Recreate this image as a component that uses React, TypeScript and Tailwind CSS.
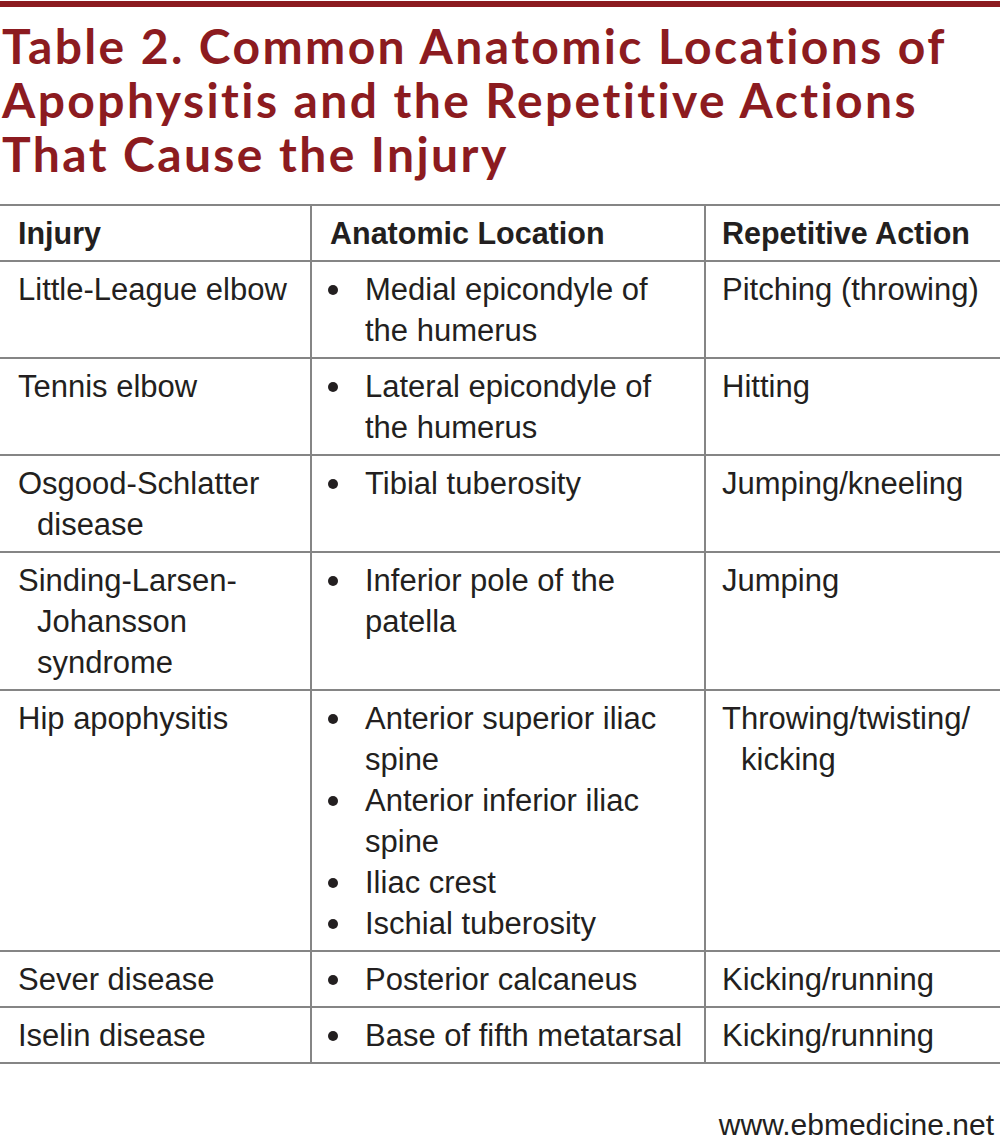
const body = "font-['Liberation_Sans',Arial,sans-serif]"

type Row = {
  injury: string
  locations: string[]
  action: React.ReactNode
}

const rows: Row[] = [
  { injury: 'Little-League elbow', locations: ['Medial epicondyle of the humerus'], action: 'Pitching (throwing)' },
  { injury: 'Tennis elbow', locations: ['Lateral epicondyle of the humerus'], action: 'Hitting' },
  { injury: 'Osgood-Schlatter disease', locations: ['Tibial tuberosity'], action: 'Jumping/kneeling' },
  { injury: 'Sinding-Larsen-Johansson syndrome', locations: ['Inferior pole of the patella'], action: 'Jumping' },
  {
    injury: 'Hip apophysitis',
    locations: ['Anterior superior iliac spine', 'Anterior inferior iliac spine', 'Iliac crest', 'Ischial tuberosity'],
    action: (
      <>
        Throwing/twisting/<wbr />kicking
      </>
    ),
  },
  { injury: 'Sever disease', locations: ['Posterior calcaneus'], action: 'Kicking/running' },
  { injury: 'Iselin disease', locations: ['Base of fifth metatarsal'], action: 'Kicking/running' },
]

const cell = 'pt-[7px] pb-[6px] leading-[41px] border-b-2 border-[#858585]'

export default function App() {
  return (
    <div className={`w-[1000px] min-h-[1139px] bg-white text-[#231f20] ${body}`}>
      <div className="mt-[1px] h-[6px] bg-[#8c1b20]" />

      <h1 className="mt-[12px] pl-[2px] font-['Lato',sans-serif] font-bold text-[48px] leading-[54px] text-[#8c1b20] tracking-[2.4px]">
        Table 2. Common Anatomic Locations of
        <br />
        Apophysitis and the Repetitive Actions
        <br />
        That Cause the Injury
      </h1>

      <div className="mt-[23px] border-t-2 border-[#858585] grid grid-cols-[310px_394px_296px] text-[31px]">
        <div className={`${cell} pl-[18px] font-bold text-[30.5px]`}>Injury</div>
        <div className={`${cell} pl-[18px] border-l-2 font-bold text-[30.5px]`}>Anatomic Location</div>
        <div className={`${cell} pl-[16px] border-l-2 font-bold text-[30.5px]`}>Repetitive Action</div>

        {rows.map((r) => (
          <div key={r.injury} className="contents">
            <div className={`${cell} pl-[37px] pr-[4px] -indent-[19px]`}>{r.injury}</div>
            <div className={`${cell} border-l-2 pl-[16px] pr-[10px] flex flex-col`}>
              {r.locations.map((l) => (
                <div key={l} className="flex">
                  <div className="w-[37px] h-[41px] flex items-center shrink-0">
                    <span className="w-[10px] h-[10px] rounded-full bg-[#231f20]" />
                  </div>
                  <div className="flex-1">{l}</div>
                </div>
              ))}
            </div>
            <div className={`${cell} border-l-2 pl-[35px] -indent-[19px]`}>{r.action}</div>
          </div>
        ))}
      </div>

      <div className="mt-[40px] pr-[6px] text-right text-[30px] leading-[41px]">www.ebmedicine.net</div>
    </div>
  )
}
